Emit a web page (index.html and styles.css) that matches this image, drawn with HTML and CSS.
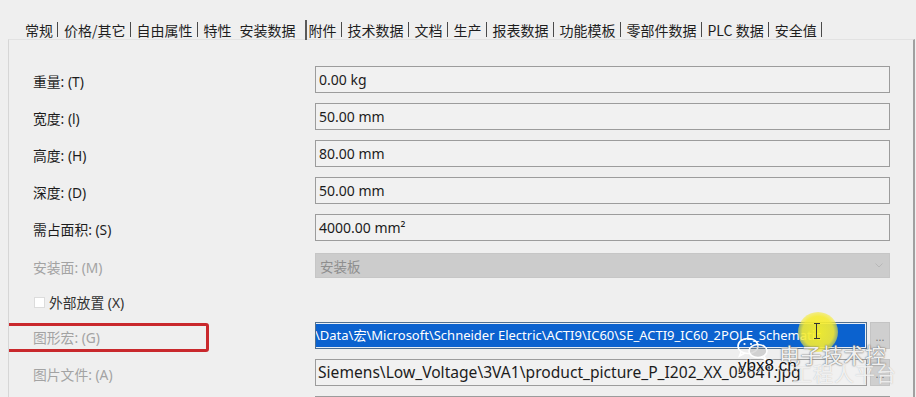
FILE: index.html
```html
<!DOCTYPE html>
<html lang="zh-CN">
<head>
<meta charset="utf-8">
<title>安装数据</title>
<link rel="stylesheet" href="styles.css">
</head>
<body>
<div class="tabs">
  <span class="tab first">常规</span><span class="sep"></span>
  <span class="tab">价格/其它</span><span class="sep"></span>
  <span class="tab">自由属性</span><span class="sep"></span>
  <span class="tab before-active">特性</span>
  <span class="tab active">安装数据</span><span class="sep thick"></span>
  <span class="tab after-active">附件</span><span class="sep"></span>
  <span class="tab">技术数据</span><span class="sep"></span>
  <span class="tab">文档</span><span class="sep"></span>
  <span class="tab">生产</span><span class="sep"></span>
  <span class="tab">报表数据</span><span class="sep"></span>
  <span class="tab">功能模板</span><span class="sep"></span>
  <span class="tab">零部件数据</span><span class="sep"></span>
  <span class="tab">PLC 数据</span><span class="sep"></span>
  <span class="tab">安全值</span><span class="sep"></span>
</div>
<div class="panel">
  <div class="row first-row"><span class="lbl">重量: (T)</span><div class="field">0.00 kg</div></div>
  <div class="row"><span class="lbl">宽度: (l)</span><div class="field">50.00 mm</div></div>
  <div class="row"><span class="lbl">高度: (H)</span><div class="field">80.00 mm</div></div>
  <div class="row"><span class="lbl">深度: (D)</span><div class="field">50.00 mm</div></div>
  <div class="row"><span class="lbl">需占面积: (S)</span><div class="field">4000.00 mm²</div></div>
  <div class="row combo-row"><span class="lbl dis">安装面: (M)</span><div class="combo"><span>安装板</span><svg class="arrow" width="8" height="5" viewBox="0 0 8 5"><path d="M0.5 0.5 L4 4 L7.5 0.5" fill="none" stroke="#b8b8b8" stroke-width="1"/></svg></div></div>
  <div class="row check-row"><span class="chk"></span><span class="chk-lbl">外部放置 (X)</span></div>
  <div class="row macro-row">
    <span class="lbl dis">图形宏: (G)</span>
    <div class="field sel"><span class="seltext">\Data\宏\Microsoft\Schneider Electric\ACTI9\IC60\SE_ACTI9_IC60_2POLE_Schematic</span></div>
    <div class="btn">...</div>
    <div class="redbox"></div>
  </div>
  <div class="row"><span class="lbl dis">图片文件: (A)</span><div class="field pic">Siemens\Low_Voltage\3VA1\product_picture_P_I202_XX_05641.jpg</div><div class="btn">...</div></div>
  <div class="row"><span class="lbl"></span><div class="field"></div></div>
</div>

<div class="cursor-glow"></div>
<div class="ibeam"></div>
<svg class="wx" width="36" height="24" viewBox="0 0 36 24">
  <ellipse cx="12" cy="9" rx="10" ry="7.5" fill="none" stroke="#ffffff" stroke-width="1.6"/>
  <path d="M5 15 L3.5 19 L9 16" fill="none" stroke="#ffffff" stroke-width="1.6"/>
  <ellipse cx="22" cy="14" rx="9" ry="6.5" fill="rgba(120,120,120,0.25)" stroke="#ffffff" stroke-width="1.6"/>
  <path d="M28 19 L30 23 L25 20" fill="none" stroke="#ffffff" stroke-width="1.6"/>
  <circle cx="8.5" cy="7" r="1.1" fill="#ffffff"/>
  <circle cx="15" cy="7" r="1.1" fill="#ffffff"/>
</svg>
<div class="wm-title">电子技术控</div>
<div class="wm-site">ybx8.cn</div>
<div class="wm-sub">工程人平台</div>
</body>
</html>
```

FILE: styles.css
```css
* { box-sizing: border-box; }
html, body {
  margin: 0;
  padding: 0;
  width: 916px;
  height: 397px;
  overflow: hidden;
  background: #efefef;
  font-family: "Noto Sans", "Noto Sans CJK SC", sans-serif;
  color: #1c1c1c;
}
body { position: relative; }

.tabs {
  height: 39px;
  display: flex;
  align-items: center;
  padding-left: 19px;
  padding-top: 20px;
  font-family: "Noto Sans CJK SC", "Noto Sans", sans-serif;
  font-size: 14px;
  color: #1e1e1e;
  white-space: nowrap;
}
.tab {
  padding: 0 4px 0 6px;
  line-height: 16px;
}
.tab.before-active { padding-right: 3px; }
.tab.active { padding: 0 9px 0 5px; }
.tab.after-active { padding-left: 2px; }
.sep {
  width: 1px;
  height: 15px;
  background: #4a4a4a;
}
.sep.thick {
  width: 2px;
  height: 20px;
  background: #5a5a5a;
}

.panel {
  margin-left: 8px;
  width: 907px;
  height: 358px;
  overflow: hidden;
  border-top: 1px solid #e2e2e2;
  border-left: 1px solid #d6d6d6;
  border-right: 2px solid #a0a0a0;
  padding: 26px 23px 0 24px;
  display: flex;
  flex-direction: column;
}

.row {
  display: flex;
  align-items: center;
  height: 27px;
  margin-top: 10px;
  position: relative;
  flex: none;
}
.row.first-row { margin-top: 0; }
.lbl {
  width: 282px;
  flex: none;
  font-size: 13.8px;
  padding-top: 3px;
  color: #1c1c1c;
  font-family: "Noto Sans", "Noto Sans CJK SC", sans-serif;
}
.lbl.dis { color: #a3a3a3; }

.field {
  flex: 1;
  height: 27px;
  border: 1px solid #9c9c9c;
  background: #f1f1f1;
  padding-left: 3px;
  font-size: 14px;
  line-height: 25px;
  white-space: nowrap;
  overflow: hidden;
  color: #1c1c1c;
}
.field.pic { font-size: 15.6px; padding-left: 2px; }

.combo-row { margin-top: 12px; height: 25px; }
.combo {
  flex: 1;
  height: 25px;
  background: #cccccc;
  border: 1px solid #c6c6c6;
  display: flex;
  align-items: center;
  justify-content: space-between;
  padding: 0 6px 0 4px;
  font-size: 13.5px;
  color: #8e8e8e;
}
.arrow { display: block; }

.check-row { margin-top: 14px; height: 20px; }
.chk {
  width: 11px;
  height: 11px;
  background: #ffffff;
  border: 1px solid #dcdcdc;
  margin-left: 1px;
  margin-right: 4px;
}
.chk-lbl { font-size: 13.8px; color: #333333; }

.macro-row { margin-top: 10px; }
.field.sel {
  border: 1px solid #51708f;
  padding: 1px;
  background: #e8eef5;
}
.seltext {
  display: block;
  height: 23px;
  line-height: 23px;
  background: #0b62cf;
  color: #ffffff;
  font-size: 13px;
  padding-left: 1px;
  margin-left: -3px;
}
.btn {
  width: 20px;
  height: 27px;
  margin-left: 3px;
  background: #cfcfcf;
  border: 1px solid #c4c4c4;
  color: #7a7a7a;
  font-size: 11px;
  text-align: center;
  line-height: 28px;
  flex: none;
}
.redbox {
  position: absolute;
  left: -27px;
  top: 1px;
  width: 203px;
  height: 29px;
  border: 3px solid #c9282c;
  border-radius: 3px;
}

.cursor-glow {
  position: absolute;
  left: 798px;
  top: 312px;
  width: 40px;
  height: 40px;
  border-radius: 50%;
  background: radial-gradient(circle, rgba(248,240,40,0.95) 0%, rgba(245,235,50,0.9) 55%, rgba(245,235,60,0.35) 80%, rgba(245,235,60,0) 100%);
}
.ibeam {
  position: absolute;
  left: 816px;
  top: 323px;
  width: 2px;
  height: 16px;
  border-left: 1px solid #333;
}
.ibeam::before, .ibeam::after {
  content: "";
  position: absolute;
  left: -3px;
  width: 6px;
  height: 1px;
  background: #333;
}
.ibeam::before { top: 0; }
.ibeam::after { bottom: 0; }

.wx {
  position: absolute;
  left: 736px;
  top: 337px;
}
.wm-title {
  position: absolute;
  left: 779px;
  top: 341px;
  font-family: "Noto Sans CJK SC", sans-serif;
  font-size: 21px;
  line-height: 26px;
  color: rgba(255,255,255,0.92);
  text-shadow: 0 0 1px #666, 0 0 2px #777;
  letter-spacing: 0.5px;
}
.wm-site {
  position: absolute;
  left: 738px;
  top: 356px;
  font-family: "Liberation Sans", sans-serif;
  font-size: 17px;
  line-height: 20px;
  color: #111;
  text-shadow: 0 0 2px #fff, 0 0 2px #fff;
}
.wm-sub {
  position: absolute;
  left: 792px;
  top: 362px;
  font-family: "Noto Sans CJK SC", sans-serif;
  font-size: 20px;
  line-height: 24px;
  color: rgba(255,255,255,0.8);
  letter-spacing: 1px;
  text-shadow: 0 0 1px rgba(120,120,120,0.5);
}
```
